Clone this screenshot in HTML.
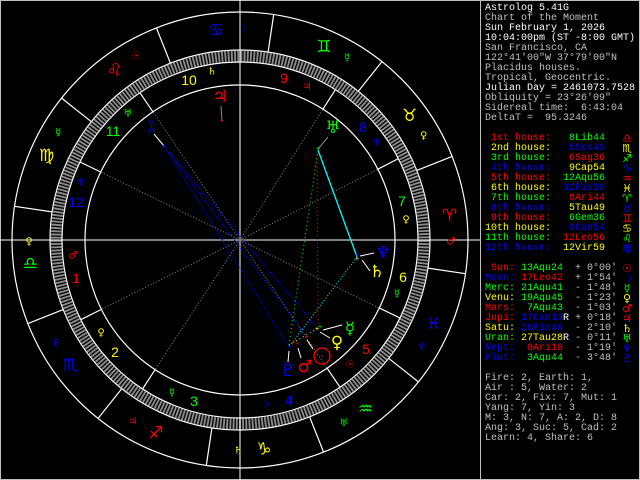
<!DOCTYPE html>
<html><head><meta charset="utf-8"><style>
html,body{margin:0;padding:0;background:#000;}
#w{position:relative;width:640px;height:480px;overflow:hidden;background:#000;}
svg{position:absolute;left:0;top:0;}
.t{position:absolute;left:485px;top:4px;font:10px/10px "Liberation Mono",monospace;white-space:pre;color:#c0c0c0;}
.g{position:absolute;left:620px;font:11px/10px "DejaVu Sans",sans-serif;width:14px;text-align:center;}
.W{color:#fff}.R{color:#f00}.G{color:#0f0}.B{color:#00f}.Y{color:#ff0}.L{color:#c0c0c0}
</style></head><body><div id="w">
<svg width="640" height="480" viewBox="0 0 640 480">
<rect x="0.5" y="0.5" width="639" height="479" fill="none" stroke="#c0c0c0"/>
<line x1="480.5" y1="0" x2="480.5" y2="480" stroke="#c0c0c0"/>
<g fill="none" stroke="#fff" stroke-width="1.2">
<circle cx="240" cy="240" r="228"/>
<circle cx="240" cy="240" r="190"/>
<circle cx="240" cy="240" r="178"/>
<circle cx="240" cy="240" r="155"/>
</g>
<circle cx="240" cy="240" r="184" fill="none" stroke="#8a8a8a" stroke-width="11" stroke-dasharray="1.9 1.3"/>
<line x1="0" y1="240" x2="480" y2="240" stroke="#fff"/>
<line x1="240" y1="0" x2="240" y2="480" stroke="#fff"/>
<g stroke="#fff" stroke-width="1.2">
<line x1="427.9" y1="268.1" x2="465.5" y2="273.7"/>
<line x1="416.8" y1="170.4" x2="452.1" y2="156.4"/>
<line x1="358.3" y1="91.3" x2="381.9" y2="61.6"/>
<line x1="268.1" y1="52.1" x2="273.7" y2="14.5"/>
<line x1="170.4" y1="63.2" x2="156.4" y2="27.9"/>
<line x1="91.3" y1="121.7" x2="61.6" y2="98.1"/>
<line x1="52.1" y1="211.9" x2="14.5" y2="206.3"/>
<line x1="63.2" y1="309.6" x2="27.9" y2="323.6"/>
<line x1="121.7" y1="388.7" x2="98.1" y2="418.4"/>
<line x1="211.9" y1="427.9" x2="206.3" y2="465.5"/>
<line x1="309.6" y1="416.8" x2="323.6" y2="452.1"/>
<line x1="388.7" y1="358.3" x2="418.4" y2="381.9"/>
<line x1="377.9" y1="169.2" x2="398.3" y2="158.6"/>
<line x1="323" y1="109.1" x2="335.4" y2="89.7"/>
<line x1="152.9" y1="111.8" x2="140" y2="92.8"/>
<line x1="100.7" y1="172" x2="80" y2="162"/>
<line x1="101.4" y1="309.4" x2="80.8" y2="319.7"/>
<line x1="155.1" y1="369.7" x2="142.5" y2="389"/>
<line x1="327.1" y1="368.2" x2="340" y2="387.2"/>
<line x1="379.3" y1="308" x2="400" y2="318"/>
</g>
<g stroke="#888" stroke-dasharray="1 2">
<line x1="240" y1="240" x2="377.9" y2="169.2"/>
<line x1="240" y1="240" x2="323" y2="109.1"/>
<line x1="240" y1="240" x2="152.9" y2="111.8"/>
<line x1="240" y1="240" x2="100.7" y2="172"/>
<line x1="240" y1="240" x2="101.4" y2="309.4"/>
<line x1="240" y1="240" x2="155.1" y2="369.7"/>
<line x1="240" y1="240" x2="327.1" y2="368.2"/>
<line x1="240" y1="240" x2="379.3" y2="308"/>
</g>
<g stroke="#00f" stroke-dasharray="1 1.5" stroke-width="1.2">
<line x1="164" y1="146" x2="289" y2="347"/>
<line x1="164" y1="146" x2="307" y2="337"/>
<line x1="164" y1="146" x2="318" y2="329"/>
</g>
<line x1="318" y1="150" x2="357" y2="257" stroke="#0ff" stroke-width="1.3"/>
<line x1="357" y1="257" x2="289" y2="347" stroke="#0ff" stroke-dasharray="1 2"/>
<line x1="318" y1="150" x2="289" y2="345" stroke="#0f0" stroke-dasharray="1 3"/>
<line x1="317" y1="155" x2="318" y2="327" stroke="#f00" stroke-dasharray="1 3"/>
<line x1="289" y1="345" x2="320" y2="327" stroke="#ff0" stroke-dasharray="1 3"/>
<g stroke="#fff">
<line x1="164" y1="146" x2="154" y2="134"/>
<line x1="222" y1="121" x2="221" y2="106" stroke="#888"/>
<line x1="318" y1="149" x2="328" y2="137" stroke="#888"/>
<line x1="360" y1="256" x2="374" y2="253"/>
<line x1="362" y1="260" x2="370" y2="271"/>
<line x1="323" y1="330" x2="342" y2="325"/>
<line x1="320" y1="332" x2="330" y2="338"/>
<line x1="307" y1="340" x2="313" y2="349"/>
<line x1="298" y1="348" x2="301" y2="358"/>
<line x1="289" y1="351" x2="288" y2="362"/>
</g>
<g font-family="DejaVu Sans" font-size="6" text-anchor="middle" dominant-baseline="central">
<text x="164" y="146" fill="#00f">+</text><text x="222" y="121" fill="#f00">+</text>
<text x="318" y="149" fill="#0f0">+</text><text x="357" y="255" fill="#00f">+</text>
<text x="357" y="259" fill="#ff0">+</text><text x="320" y="327" fill="#0f0">+</text>
<text x="317" y="329" fill="#ff0">+</text><text x="307" y="337" fill="#f00">+</text>
<text x="297" y="344" fill="#f00">+</text><text x="289" y="347" fill="#00f">+</text>
</g>
<g font-family="DejaVu Sans" font-size="17" text-anchor="middle" dominant-baseline="central">
<text x="449.6" y="216" fill="#f00">♈</text>
<text x="409.6" y="116" fill="#ff0">♉</text>
<text x="324.1" y="47" fill="#0f0">♊</text>
<text x="216.1" y="30.4" fill="#00f">♋</text>
<text x="114.5" y="70.4" fill="#f00">♌</text>
<text x="46.5" y="155.9" fill="#ff0">♍</text>
<text x="30.4" y="263.9" fill="#0f0">♎</text>
<text x="70.4" y="365.5" fill="#00f">♏</text>
<text x="155.9" y="433.5" fill="#f00">♐</text>
<text x="263.9" y="449.6" fill="#ff0">♑</text>
<text x="365.5" y="409.6" fill="#0f0">♒</text>
<text x="433.5" y="324.1" fill="#00f">♓</text>
<text x="148" y="127" fill="#00f">☽</text>
<text x="220" y="97" fill="#f00">♃</text>
<text x="333" y="128" fill="#0f0">♅</text>
<text x="383" y="253" fill="#00f">♆</text>
<text x="377" y="272" fill="#ff0">♄</text>
<text x="350" y="329" fill="#0f0">☿</text>
<text x="337" y="343" fill="#ff0">♀</text>
<text x="305" y="367" fill="#f00">♂</text>
<text x="288" y="371" fill="#00f">♇</text>
</g>
<circle cx="322" cy="356" r="8" fill="none" stroke="#f00" stroke-width="1.3"/>
<circle cx="322" cy="356" r="0.8" fill="#f00"/>
<g font-family="DejaVu Sans" font-size="10" text-anchor="middle" dominant-baseline="central">
<text x="451" y="241.8" fill="#f00">♂</text>
<text x="423.7" y="136.1" fill="#ff0">♀</text>
<text x="347.1" y="58.2" fill="#0f0">☿</text>
<text x="241.8" y="29" fill="#00f">☽</text>
<text x="136.1" y="56.3" fill="#f00">☉</text>
<text x="58.2" y="132.9" fill="#0f0">☿</text>
<text x="29" y="241.8" fill="#ff0">♀</text>
<text x="56.3" y="343.9" fill="#00f">♇</text>
<text x="132.9" y="421.8" fill="#f00">♃</text>
<text x="238.2" y="451" fill="#ff0">♄</text>
<text x="343.9" y="423.7" fill="#0f0">♅</text>
<text x="421.8" y="347.1" fill="#00f">♆</text>
<text x="73" y="256" fill="#f00">♂</text>
<text x="101" y="333" fill="#ff0">♀</text>
<text x="172" y="393" fill="#0f0">☿</text>
<text x="265" y="405" fill="#00f">☽</text>
<text x="350" y="365" fill="#f00">☉</text>
<text x="397" y="294" fill="#0f0">☿</text>
<text x="406" y="220" fill="#ff0">♀</text>
<text x="377" y="143" fill="#00f">♆</text>
<text x="307" y="87" fill="#f00">♃</text>
<text x="212" y="72" fill="#ff0">♄</text>
<text x="128" y="114" fill="#0f0">♅</text>
<text x="81" y="183" fill="#00f">♆</text>
</g>
<g font-family="Liberation Sans" font-size="14" text-anchor="middle" dominant-baseline="central">
<text x="76" y="278" fill="#f00">1</text>
<text x="115" y="352" fill="#ff0">2</text>
<text x="194" y="401" fill="#0f0">3</text>
<text x="289" y="400" fill="#00f">4</text>
<text x="366" y="349" fill="#f00">5</text>
<text x="403" y="277" fill="#ff0">6</text>
<text x="402" y="201" fill="#0f0">7</text>
<text x="363" y="127" fill="#00f">8</text>
<text x="284" y="78" fill="#f00">9</text>
<text x="189" y="80" fill="#ff0">10</text>
<text x="113" y="131" fill="#0f0">11</text>
<text x="76" y="202" fill="#00f">12</text>
</g>
</svg>
<div class="t"><span class="W">Astrolog 5.41G</span>
Chart of the Moment
<span class="W">Sun February 1, 2026</span>
<span class="W">10:04:00pm (ST -8:00 GMT)</span>
San Francisco, CA
122°41'00"W 37°79'00"N
Placidus houses.
Tropical, Geocentric.
<span class="W">Julian Day = 2461073.7528</span>
Obliquity = 23°26'09"
Sidereal time:  6:43:04
DeltaT =  95.3246

<span class="R"> 1st house:</span>  <span class="G"> 8Lib44</span>
<span class="Y"> 2nd house:</span>  <span class="B"> 5Sco49</span>
<span class="G"> 3rd house:</span>  <span class="R"> 6Sag36</span>
<span class="B"> 4th house:</span>  <span class="Y"> 9Cap54</span>
<span class="R"> 5th house:</span>  <span class="G">12Aqu56</span>
<span class="Y"> 6th house:</span>  <span class="B">12Pis59</span>
<span class="G"> 7th house:</span>  <span class="R"> 8Ari44</span>
<span class="B"> 8th house:</span>  <span class="Y"> 5Tau49</span>
<span class="R"> 9th house:</span>  <span class="G"> 6Gem36</span>
<span class="Y">10th house:</span>  <span class="B"> 9Can54</span>
<span class="G">11th house:</span>  <span class="R">12Leo56</span>
<span class="B">12th house:</span>  <span class="Y">12Vir59</span>

<span class="R"> Sun:</span> <span class="G">13Aqu24</span>  + 0°00'
<span class="B">Moon:</span> <span class="R">17Leo42</span>  + 1°54'
<span class="G">Merc:</span> <span class="G">21Aqu41</span>  - 1°48'
<span class="Y">Venu:</span> <span class="G">19Aqu45</span>  - 1°23'
<span class="R">Mars:</span> <span class="G"> 7Aqu43</span>  - 1°03'
<span class="R">Jupi:</span> <span class="B">17Can13</span><span class="W">R</span> + 0°18'
<span class="Y">Satu:</span> <span class="B">28Pis46</span>  - 2°10'
<span class="G">Uran:</span> <span class="Y">27Tau28</span><span class="W">R</span> - 0°11'
<span class="B">Nept:</span> <span class="R"> 0Ari10</span>  - 1°19'
<span class="B">Plut:</span> <span class="G"> 3Aqu44</span>  - 3°48'

Fire: 2, Earth: 1,
Air : 5, Water: 2
Car: 2, Fix: 7, Mut: 1
Yang: 7, Yin: 3
M: 3, N: 7, A: 2, D: 8
Ang: 3, Suc: 5, Cad: 2
Learn: 4, Share: 6</div>
<div class="g R" style="top:134px">♎</div>
<div class="g Y" style="top:144px">♏</div>
<div class="g G" style="top:154px">♐</div>
<div class="g B" style="top:164px">♑</div>
<div class="g R" style="top:174px">♒</div>
<div class="g Y" style="top:184px">♓</div>
<div class="g G" style="top:194px">♈</div>
<div class="g B" style="top:204px">♉</div>
<div class="g R" style="top:214px">♊</div>
<div class="g Y" style="top:224px">♋</div>
<div class="g G" style="top:234px">♌</div>
<div class="g B" style="top:244px">♍</div>
<div class="g R" style="top:264px">☉</div>
<div class="g B" style="top:274px">☽</div>
<div class="g G" style="top:284px">☿</div>
<div class="g Y" style="top:294px">♀</div>
<div class="g R" style="top:304px">♂</div>
<div class="g R" style="top:314px">♃</div>
<div class="g Y" style="top:324px">♄</div>
<div class="g G" style="top:334px">♅</div>
<div class="g B" style="top:344px">♆</div>
<div class="g B" style="top:354px">♇</div>
</div></body></html>
